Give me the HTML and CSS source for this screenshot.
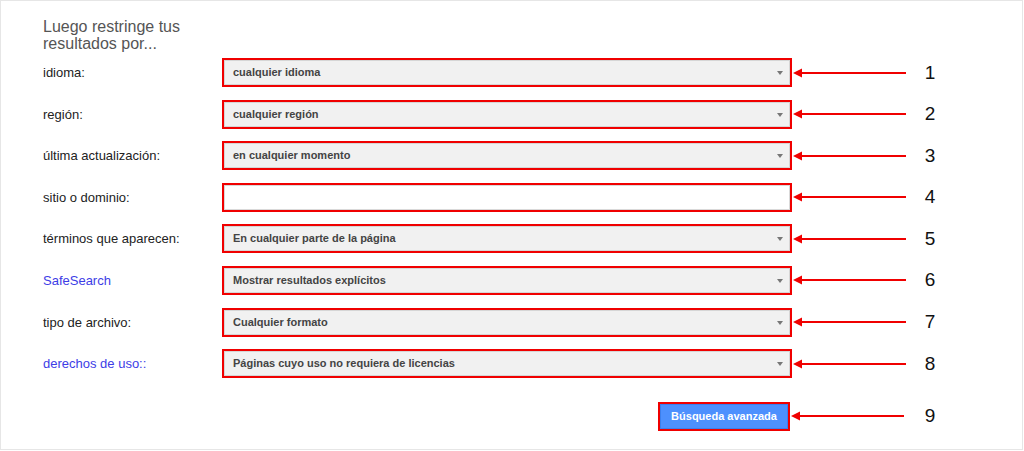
FILE: index.html
```html
<!DOCTYPE html>
<html lang="es">
  <head>
    <meta charset="UTF-8" />
    <title>Búsqueda avanzada</title>
    <link rel="stylesheet" href="styles.css">
  </head>
  <body>
    <main class="panel">
      <h2 class="panel-title">Luego restringe tus<br />resultados por...</h2>
      <div class="rows">
        <div class="row">
          <span class="label">idioma:</span>
          <div class="mark"><div class="select">cualquier idioma<span class="caret"></span></div></div>
          <svg class="arrow" viewBox="0 0 114 12"><line x1="8" y1="6" x2="114" y2="6" /><polygon points="1,6 10,1.5 10,10.5" /></svg>
          <span class="num">1</span>
        </div>
        <div class="row">
          <span class="label">región:</span>
          <div class="mark"><div class="select">cualquier región<span class="caret"></span></div></div>
          <svg class="arrow" viewBox="0 0 114 12"><line x1="8" y1="6" x2="114" y2="6" /><polygon points="1,6 10,1.5 10,10.5" /></svg>
          <span class="num">2</span>
        </div>
        <div class="row">
          <span class="label">última actualización:</span>
          <div class="mark"><div class="select">en cualquier momento<span class="caret"></span></div></div>
          <svg class="arrow" viewBox="0 0 114 12"><line x1="8" y1="6" x2="114" y2="6" /><polygon points="1,6 10,1.5 10,10.5" /></svg>
          <span class="num">3</span>
        </div>
        <div class="row">
          <span class="label">sitio o dominio:</span>
          <div class="mark"><div class="text-input"></div></div>
          <svg class="arrow" viewBox="0 0 114 12"><line x1="8" y1="6" x2="114" y2="6" /><polygon points="1,6 10,1.5 10,10.5" /></svg>
          <span class="num">4</span>
        </div>
        <div class="row">
          <span class="label">términos que aparecen:</span>
          <div class="mark"><div class="select">En cualquier parte de la página<span class="caret"></span></div></div>
          <svg class="arrow" viewBox="0 0 114 12"><line x1="8" y1="6" x2="114" y2="6" /><polygon points="1,6 10,1.5 10,10.5" /></svg>
          <span class="num">5</span>
        </div>
        <div class="row">
          <span class="label link">SafeSearch</span>
          <div class="mark"><div class="select">Mostrar resultados explícitos<span class="caret"></span></div></div>
          <svg class="arrow" viewBox="0 0 114 12"><line x1="8" y1="6" x2="114" y2="6" /><polygon points="1,6 10,1.5 10,10.5" /></svg>
          <span class="num">6</span>
        </div>
        <div class="row">
          <span class="label">tipo de archivo:</span>
          <div class="mark"><div class="select">Cualquier formato<span class="caret"></span></div></div>
          <svg class="arrow" viewBox="0 0 114 12"><line x1="8" y1="6" x2="114" y2="6" /><polygon points="1,6 10,1.5 10,10.5" /></svg>
          <span class="num">7</span>
        </div>
        <div class="row">
          <span class="label link">derechos de uso::</span>
          <div class="mark"><div class="select">Páginas cuyo uso no requiera de licencias<span class="caret"></span></div></div>
          <svg class="arrow" viewBox="0 0 114 12"><line x1="8" y1="6" x2="114" y2="6" /><polygon points="1,6 10,1.5 10,10.5" /></svg>
          <span class="num">8</span>
        </div>
        <div class="row button-row">
          <span class="label"></span>
          <div class="button-cell">
            <div class="mark"><button class="search-button" type="button">Búsqueda avanzada</button></div>
          </div>
          <svg class="arrow" viewBox="0 0 114 12"><line x1="8" y1="6" x2="114" y2="6" /><polygon points="1,6 10,1.5 10,10.5" /></svg>
          <span class="num">9</span>
        </div>
      </div>
    </main>
  </body>
</html>
```

FILE: styles.css
```css
* {
  box-sizing: border-box;
}
body {
  margin: 0;
  background: #ffffff;
  font-family: "Liberation Sans", Arial, sans-serif;
}

.panel {
  width: 1023px;
  height: 450px;
  border: 1px solid #e6e6e6;
  padding: 17px 0 0 42px;
}

.panel-title {
  margin: 0;
  font-size: 16px;
  font-weight: normal;
  line-height: 17px;
  color: #555555;
}

.rows {
  margin-top: 6px;
  display: flex;
  flex-direction: column;
  gap: 12.6px;
}

.row {
  display: grid;
  grid-template-columns: 179px 570px 114px 48px;
  align-items: center;
  height: 29px;
}

.label {
  font-size: 13px;
  color: #222222;
}
.label.link {
  color: #3d3de6;
}

.mark {
  border: 2px solid #f00000;
  height: 29px;
}

.select {
  position: relative;
  height: 25px;
  border: 1px solid #d6d6d6;
  background: #f1f1f1;
  padding-left: 8px;
  font-size: 11px;
  font-weight: bold;
  line-height: 23px;
  color: #444444;
}

.caret {
  position: absolute;
  right: 6px;
  top: 10px;
  border-left: 3.5px solid transparent;
  border-right: 3.5px solid transparent;
  border-top: 4px solid #777777;
}

.text-input {
  height: 25px;
  border: 1px solid #d9d9d9;
  background: #ffffff;
}

.arrow {
  width: 114px;
  height: 12px;
  display: block;
}
.arrow line {
  stroke: #f00000;
  stroke-width: 2;
}
.arrow polygon {
  fill: #f00000;
}

.num {
  font-size: 19px;
  text-align: center;
  color: #111111;
}

.button-row {
  margin-top: 11px;
  grid-template-columns: 179px 568px 116px 48px;
}

.button-cell {
  display: flex;
  justify-content: flex-end;
}
.button-cell .mark {
  width: 132px;
}

.search-button {
  all: unset;
  display: block;
  box-sizing: border-box;
  width: 128px;
  height: 25px;
  background: #4d90fe;
  border: 1px solid #3b7fed;
  color: #ffffff;
  font-family: "Liberation Sans", Arial, sans-serif;
  font-size: 11px;
  font-weight: bold;
  text-align: center;
  line-height: 23px;
}
```
